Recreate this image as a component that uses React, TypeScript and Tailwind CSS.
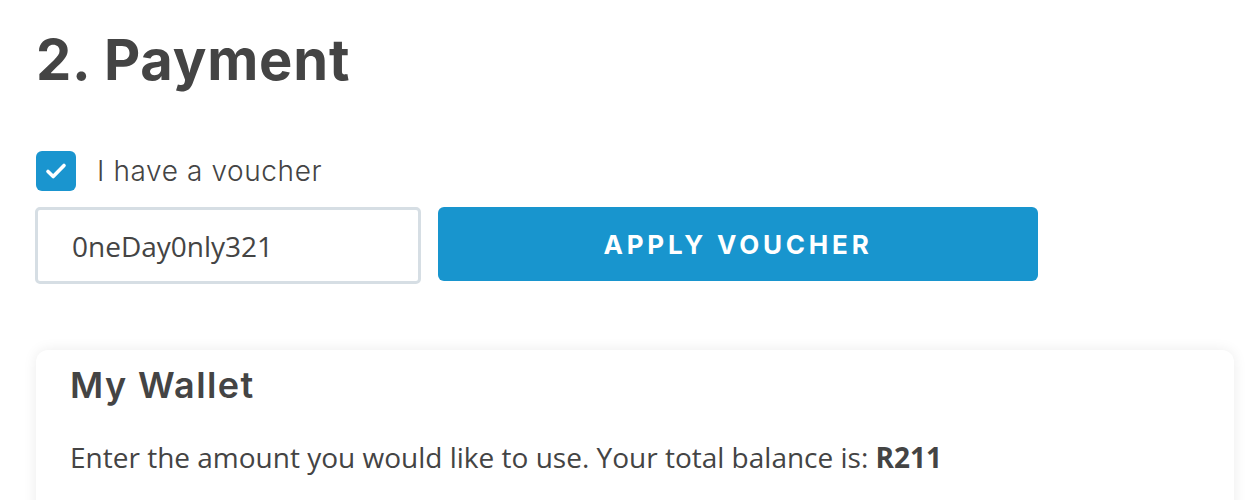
import React, { useState } from 'react';

const heading = { fontFamily: 'Inter, "DejaVu Sans", sans-serif' };
const body = { fontFamily: '"Open Sans", "Noto Sans", sans-serif' };

export default function App() {
  const [hasVoucher, setHasVoucher] = useState(true);
  const [code, setCode] = useState('0neDay0nly321');

  return (
    <div className="h-[500px] w-[1254px] overflow-hidden bg-white pl-[36px] pr-[20px] pt-[28px] text-[#444444]">
      <h1 className="text-[56px] font-bold leading-[64px] tracking-[0.8px]" style={heading}>
        2. Payment
      </h1>

      {/* Voucher */}
      <label className="mt-[58px] flex cursor-pointer items-center gap-[21px]">
        <button
          type="button"
          onClick={() => setHasVoucher(!hasVoucher)}
          className="flex h-[40px] w-[40px] items-center justify-center rounded-[6px] bg-[#1a95cf]"
        >
          {hasVoucher && (
            <svg width="22" height="18" viewBox="0 0 22 18" fill="none">
              <path d="M3 9.5l5.2 5L19 3.5" stroke="white" strokeWidth="3.6" strokeLinecap="round" strokeLinejoin="round" />
            </svg>
          )}
        </button>
        <span className="text-[28px] font-light tracking-[0.6px]" style={heading}>
          I have a voucher
        </span>
      </label>

      <div className="mt-[15px] flex gap-[17px]">
        <input
          value={code}
          onChange={(e) => setCode(e.target.value)}
          className="h-[77px] w-[386px] -ml-px rounded-[5px] border-[3px] border-[#d6dee4] px-[34px] text-[28px] text-[#444444] outline-none"
          style={body}
        />
        <button
          type="button"
          className="h-[74px] w-[600px] rounded-[6px] bg-[#1895ce] text-[26px] font-bold tracking-[3.8px] text-white"
          style={heading}
        >
          APPLY VOUCHER
        </button>
      </div>

      {/* Wallet */}
      <div className="mt-[66px] h-[200px] w-[1198px] rounded-[12px] bg-white px-[34px] pt-[13px] shadow-[0_0_14px_rgba(0,0,0,0.08)]">
        <h2 className="text-[36px] font-semibold leading-[44px] tracking-[1.4px]" style={heading}>
          My Wallet
        </h2>
        <p className="mt-[31px] text-[28px] leading-[38px]" style={body}>
          Enter the amount you would like to use. Your total balance is: <strong className="font-bold">R211</strong>
        </p>
      </div>
    </div>
  );
}
